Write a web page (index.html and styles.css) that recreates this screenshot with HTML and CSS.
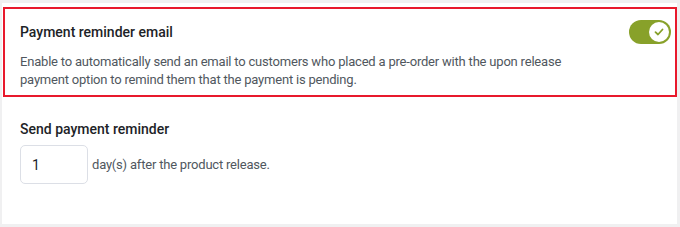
FILE: index.html
```html
<!DOCTYPE html>
<html lang="en">
<head>
    <meta charset="UTF-8">
    <title>Pre-order payment reminder</title>
    <link rel="stylesheet" href="styles.css">
</head>
<body>
    <div class="panel">
        <div class="setting highlight">
            <div class="setting-head">
                <h3>Payment reminder email</h3>
                <label class="toggle">
                    <input type="checkbox" checked>
                    <span class="knob">
                        <svg width="10" height="8" viewBox="0 0 10 8">
                            <path d="M1.5 4.2 L4 6.5 L8.5 1.5" fill="none" stroke="#86a02a" stroke-width="1.8" stroke-linecap="round" stroke-linejoin="round"/>
                        </svg>
                    </span>
                </label>
            </div>
            <p class="desc">Enable to automatically send an email to customers who placed a pre-order with the upon release payment option to remind them that the payment is pending.</p>
        </div>

        <div class="setting">
            <h3>Send payment reminder</h3>
            <div class="days-row">
                <input type="text" class="days" value="1">
                <span>day(s) after the product release.</span>
            </div>
        </div>
    </div>
</body>
</html>
```

FILE: styles.css
```css
body {
    margin: 0;
    padding: 3px 3px 3px 2px;
    background-color: #f0f0f1;
    font-family: Roboto, "Liberation Sans", sans-serif;
    color: #1d2327;
}

.panel {
    height: 221px;
    background-color: #fff;
    box-sizing: border-box;
    padding-top: 4px;
}

.highlight {
    margin-left: 1px;
    border: 2px solid #e8192c;
    padding: 11px 4px 6px 15px;
}

.setting-head {
    display: flex;
    justify-content: space-between;
    align-items: center;
    height: 24px;
}

h3 {
    margin: 0;
    font-size: 14px;
    font-weight: 500;
    line-height: 20px;
}

.desc {
    margin: 9px 0 0;
    max-width: 560px;
    font-size: 13px;
    letter-spacing: -0.2px;
    line-height: 18px;
    color: #50575e;
}

.toggle {
    position: relative;
    display: block;
    width: 42px;
    height: 24px;
    border-radius: 12px;
    background-color: #88a12a;
    cursor: pointer;
}

.toggle input {
    display: none;
}

.knob {
    position: absolute;
    top: 2px;
    right: 2px;
    width: 20px;
    height: 20px;
    border-radius: 50%;
    background-color: #fff;
    display: flex;
    align-items: center;
    justify-content: center;
}

.setting + .setting {
    margin-top: 22px;
    padding-left: 18px;
}

.days-row {
    display: flex;
    align-items: center;
    gap: 4px;
    margin-top: 6px;
    font-size: 13px;
    letter-spacing: -0.2px;
    color: #50575e;
}

.days {
    width: 68px;
    height: 39px;
    box-sizing: border-box;
    padding: 0 11px;
    border: 1px solid #dcdfe6;
    border-radius: 5px;
    font-family: inherit;
    font-size: 14px;
    letter-spacing: 0;
    color: #1d2327;
}
```
